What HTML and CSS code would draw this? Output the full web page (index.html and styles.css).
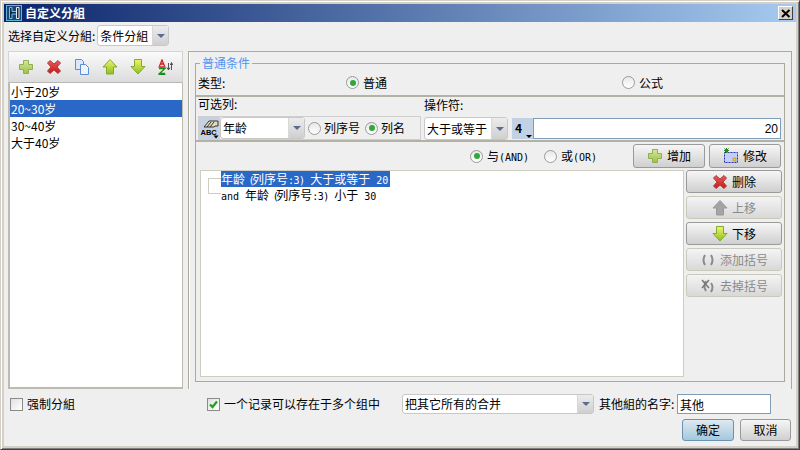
FILE: index.html
```html
<!DOCTYPE html>
<html lang="zh">
<head>
<meta charset="utf-8">
<title>自定义分組</title>
<link rel="stylesheet" href="styles.css">
</head>
<body>
<svg class="defs" width="0" height="0" aria-hidden="true">
  <defs>
    <linearGradient id="gp" x1="0" y1="0" x2="0" y2="1"><stop offset="0" stop-color="#d6e89a"/><stop offset="1" stop-color="#9cc048"/></linearGradient>
    <linearGradient id="gx" x1="0" y1="0" x2="0" y2="1"><stop offset="0" stop-color="#ee5a5a"/><stop offset="1" stop-color="#c81818"/></linearGradient>
    <linearGradient id="ga" x1="0" y1="0" x2="0" y2="1"><stop offset="0" stop-color="#f0f46a"/><stop offset="1" stop-color="#8cc020"/></linearGradient>
    <symbol id="i-plus" viewBox="0 0 16 16"><path d="M5.500 1.500h5v4h4v5h-4v4h-5v-4h-4v-5h4z" fill="url(#gp)" stroke="#8fb050"/></symbol>
    <symbol id="i-x" viewBox="0 0 16 16"><path d="M1.500 4l2.500-2.500 4 3.500 4-3.500 2.500 2.500-3.500 4 3.500 4-2.500 2.500-4-3.500-4 3.500-2.500-2.500 3.500-4z" fill="url(#gx)" stroke="#a84040"/></symbol>
    <symbol id="i-copy" viewBox="0 0 16 16"><path d="M1.500 .5h6l2 2v8h-8z" fill="#dce8fa" stroke="#5c8ed0"/><path d="M6.500 5.500h5l3 3v7h-8z" fill="#eef4fe" stroke="#5c8ed0"/></symbol>
    <symbol id="i-up" viewBox="0 0 16 16"><path d="M8 .5l7 7.500h-3.500v7h-7v-7h-3.500z" fill="url(#ga)" stroke="#84a830"/></symbol>
    <symbol id="i-down" viewBox="0 0 16 16"><path d="M4.500 .5h7v7h3.500l-7 7.500-7-7.500h3.500z" fill="url(#ga)" stroke="#84a830"/></symbol>
    <symbol id="i-up-off" viewBox="0 0 16 16"><path d="M8 .5l7 7.500h-3.500v7h-7v-7h-3.500z" fill="#a4a4a4" stroke="#999"/></symbol>
  </defs>
</svg>

<div class="window">
  <header class="titlebar">
    <svg class="app-icon" viewBox="0 0 16 16" width="16" height="16"><rect x=".5" y=".5" width="15" height="15" fill="#1c4672" stroke="#5fb4d8"/><path d="M3.500 2.500v11h2.500V9h4.500V6.500H6v-4z" fill="#0e2a50" stroke="#6cc4e4"/><path d="M10.500 2.500h2.500v11h-2.500z" fill="#0e2a50" stroke="#e0f0f8"/></svg>
    <span class="title-text">自定义分組</span>
    <span class="close-btn"><svg viewBox="0 0 10 9" width="10" height="9"><path d="M1 1l7.500 7M8.500 1l-7.500 7" stroke="#000" stroke-width="2" fill="none"/></svg></span>
  </header>

  <div class="select-row">
    <span>选择自定义分組:</span>
    <div class="combo combo-kind"><span class="combo-value">条件分組</span><span class="combo-arrow"></span></div>
  </div>

  <main class="main">
    <section class="left-panel">
      <div class="toolbar">
        <svg class="icon"><use href="#i-plus"/></svg>
        <svg class="icon"><use href="#i-x"/></svg>
        <svg class="icon"><use href="#i-copy"/></svg>
        <svg class="icon"><use href="#i-up"/></svg>
        <svg class="icon"><use href="#i-down"/></svg>
        <svg class="icon" viewBox="0 0 16 16"><path d="M1.500 7l2.500-6 2.500 6M2.500 5h3M.5 8h7" stroke="#d02020" stroke-width="1.300" fill="none"/><path d="M1 9.500h6L1.500 14.500H7M.5 15.500h7" stroke="#189018" stroke-width="1.300" fill="none"/><path d="M10.500 4v7M9 8.500l1.500 2.500L12 8.500M13.500 4v7M12.300 6l1.200-2.500L14.700 6" stroke="#555" fill="none"/></svg>
      </div>
      <ul class="group-list">
        <li>小于20岁</li>
        <li class="selected">20~30岁</li>
        <li>30~40岁</li>
        <li>大于40岁</li>
      </ul>
    </section>

    <section class="right-panel">
      <fieldset class="group-box">
        <legend>普通条件</legend>
        <div class="type-row">
          <span class="type-label">类型:</span>
          <label class="radio-item type-a"><span class="radio on"></span>普通</label>
          <label class="radio-item type-b"><span class="radio"></span>公式</label>
        </div>

        <div class="column-row">
          <div class="column-block">
            <div class="field-label">可选列:</div>
            <div class="column-box">
              <span class="abc-icon"><svg viewBox="0 0 21 22" width="21" height="22"><path d="M5 10l5-6h9v5h-3l-1 1z" stroke="#333" fill="#e8dcb8"/><path d="M8 10l4-5M11 10l4-5" stroke="#333"/><text x="1.500" y="18" class="abc-text">ABC</text><path d="M14.500 18.500h5l-2.500 3z" fill="#000"/></svg></span>
              <div class="combo combo-column"><span class="combo-value">年龄</span><span class="combo-arrow"></span></div>
              <label class="radio-item seq"><span class="radio"></span>列序号</label>
              <label class="radio-item nm"><span class="radio on"></span>列名</label>
            </div>
          </div>
          <div class="op-block">
            <div class="field-label">操作符:</div>
            <div class="combo combo-op"><span class="combo-value">大于或等于</span><span class="combo-arrow"></span></div>
          </div>
          <div class="value-block">
            <span class="num-badge">4</span>
            <input class="value-input" type="text" value="20">
          </div>
        </div>

        <div class="logic-row">
          <label class="radio-item and-item"><span class="radio on"></span><span>与<span class="mono">(AND)</span></span></label>
          <label class="radio-item or-item"><span class="radio"></span><span>或<span class="mono">(OR)</span></span></label>
          <button class="btn btn-top add-btn"><svg class="icon"><use href="#i-plus"/></svg>增加</button>
          <button class="btn btn-top"><svg class="icon" viewBox="0 0 16 16"><rect x="1.500" y="4.500" width="13" height="10" fill="#c8ccf8" stroke="#2030b0" stroke-dasharray="2 1"/><path d="M3.500 0v5M1 2.500h5M1.500 .5l4 4M5.500 .5l-4 4" stroke="#2c8030"/><rect x="10" y="10" width="3" height="3" fill="#f0d020" stroke="#a08010" stroke-width=".5"/></svg>修改</button>
        </div>

        <div class="tree-row">
          <div class="tree">
            <div class="tree-lines"></div>
            <div class="tree-nodes">
              <div class="tree-node selected">年龄<span class="mono tight"> (</span>列序号<span class="mono snug">:3) </span>大于或等于<span class="mono"> 20</span></div>
              <div class="tree-node"><span class="mono">and </span>年龄<span class="mono tight"> (</span>列序号<span class="mono snug">:3) </span>小于<span class="mono"> 30</span></div>
            </div>
          </div>
          <div class="side-buttons">
            <button class="btn"><svg class="icon"><use href="#i-x"/></svg>删除</button>
            <button class="btn disabled"><svg class="icon"><use href="#i-up-off"/></svg>上移</button>
            <button class="btn"><svg class="icon"><use href="#i-down"/></svg>下移</button>
            <button class="btn disabled"><svg class="icon" viewBox="0 0 16 16"><path d="M5 3Q2 8 5 13M11 3Q14 8 11 13" stroke="#8a8a8a" stroke-width="2" fill="none"/></svg>添加括号</button>
            <button class="btn disabled"><svg class="icon" viewBox="0 0 16 16"><path d="M6 3Q3 8 6 13M11 5Q14 9 11 14" stroke="#8a8a8a" stroke-width="2" fill="none"/><path d="M2 2l7 8M9 2l-7 8" stroke="#777" stroke-width="1.500"/></svg>去掉括号</button>
          </div>
        </div>
      </fieldset>
    </section>
  </main>

  <div class="options-row">
    <label class="check-item force"><span class="checkbox"></span>强制分組</label>
    <label class="check-item multi"><span class="checkbox"><svg viewBox="0 0 11 11" width="11" height="11"><path d="M2 5.500l2.500 2.500L9 2.500" stroke="#1ea01e" stroke-width="2.200" fill="none"/></svg></span>一个记录可以存在于多个组中</label>
    <div class="combo combo-merge"><span class="combo-value">把其它所有的合并</span><span class="combo-arrow"></span></div>
    <span class="other-label">其他組的名字:</span>
    <input class="other-input" type="text" value="其他">
  </div>

  <footer class="footer">
    <button class="btn primary">确定</button>
    <button class="btn cancel">取消</button>
  </footer>
</div>
</body>
</html>
```

FILE: styles.css
```css
* { box-sizing: border-box; }
html, body { margin: 0; padding: 0; }
body {
  width: 800px;
  height: 450px;
  overflow: hidden;
  font: 12px/16px "Noto Sans CJK SC", "Liberation Sans", sans-serif;
  color: #000;
  background: #efefef;
}
.defs { display: block; height: 0; }
.mono { font: 10px/12px "DejaVu Sans Mono", monospace; white-space: pre; }
.tight { letter-spacing: -2.5px; }
.snug { letter-spacing: -0.5px; }

.window {
  width: 800px;
  height: 450px;
  padding: 3px;
  background: #efefef;
  border: 1px solid;
  border-color: #d4d0c8 #404040 #404040 #d4d0c8;
  box-shadow: inset 1px 1px 0 #fff, inset -1px -1px 0 #808080, inset 0 0 0 3px #d4d0c8;
}

.titlebar {
  height: 18px;
  display: flex;
  align-items: center;
  padding: 0 3px 0 2px;
  background: linear-gradient(90deg, #0a246a, #a6caf0);
}
.app-icon { flex: none; }
.title-text { margin-left: 3px; flex: 1; color: #fff; font-weight: 700; }
.close-btn {
  width: 15px;
  height: 14px;
  display: flex;
  align-items: center;
  justify-content: center;
  background: #d4d0c8;
  border: 1px solid;
  border-color: #fff #404040 #404040 #fff;
}

.select-row {
  height: 21px;
  margin-top: 3px;
  padding-left: 4px;
  display: flex;
  align-items: center;
  gap: 2px;
}

.combo {
  display: flex;
  align-items: center;
  background: #fff;
  border: 1px solid #c8c8c8;
  border-radius: 3px;
  flex: none;
}
.combo-value { flex: 1; padding-left: 2px; white-space: nowrap; overflow: hidden; }
.combo-arrow {
  width: 16px;
  align-self: stretch;
  flex: none;
  display: flex;
  align-items: center;
  justify-content: center;
  background: linear-gradient(#ececec, #cfcfcf);
  border-left: 1px solid #d8d8d8;
}
.combo-arrow::after {
  content: "";
  border: 4px solid transparent;
  border-top: 4px solid #5a6a90;
  border-bottom: 0;
}
.combo-kind { width: 72px; height: 21px; }

.main {
  height: 338px;
  margin: 5px 4px 0;
  display: grid;
  grid-template-columns: 175px 604px;
  column-gap: 5px;
}

.left-panel {
  display: flex;
  flex-direction: column;
  border: 2px solid #bdbab0;
  border-top: 0;
  border-right-width: 1px;
}
.toolbar {
  height: 32px;
  margin-left: -2px;
  margin-right: -1px;
  padding-left: 9px;
  display: flex;
  align-items: center;
  gap: 12px;
  background: linear-gradient(#fafafa, #dcdcdc);
  border: 1px solid #d4d4d4;
  border-bottom-color: #b8b8b8;
}
.icon { width: 16px; height: 16px; flex: none; }
.group-list {
  flex: 1;
  margin: 0;
  padding: 0;
  list-style: none;
  background: #fff;
}
.group-list li { height: 17px; line-height: 17px; padding-left: 1px; }
.group-list li.selected { background: #2a68c8; color: #fff; }

.right-panel {
  border: 1px solid #aba99c;
  border-bottom: 0;
  padding: 0 6px;
  box-shadow: inset 1px 0 0 #fff;
}
.group-box {
  margin: 4px 0 0;
  padding: 0;
  height: 326px;
  border: 1px solid #aba99c;
  min-width: 0;
}
.group-box legend {
  margin-left: 4px;
  padding: 0 2px;
  line-height: 14px;
  color: #4f94ef;
}
.type-row {
  height: 27px;
  display: flex;
  align-items: center;
  padding-left: 2px;
  border-bottom: 2px solid #b4b2a6;
}
.type-label { width: 148px; }
.radio-item { display: flex; align-items: center; gap: 4px; white-space: nowrap; }
.type-a { width: 276px; }
.radio {
  width: 13px;
  height: 13px;
  flex: none;
  display: flex;
  align-items: center;
  justify-content: center;
  border: 1px solid #9a9a9a;
  border-radius: 50%;
  background: linear-gradient(#e8e8e8, #fff);
}
.radio.on::after {
  content: "";
  width: 6px;
  height: 6px;
  border-radius: 50%;
  background: #32a838;
}

.column-row {
  height: 45px;
  padding: 0 3px 0 2px;
  display: flex;
  align-items: flex-end;
  border-bottom: 2px solid #b4b2a6;
}
.field-label { height: 19px; line-height: 13px; }
.column-box {
  width: 223px;
  height: 24px;
  display: flex;
  align-items: center;
  border: 1px solid #cfcfcf;
}
.abc-icon { width: 21px; height: 22px; flex: none; background: #c4d2e2; }
.abc-text { font: 700 7.500px "Liberation Sans", sans-serif; fill: #000; }
.combo-column { width: 85px; height: 22px; }
.seq { margin-left: 3px; gap: 3px; }
.nm { margin-left: 5px; gap: 3px; }
.op-block { margin-left: 3px; }
.combo-op { width: 84px; height: 23px; }
.value-block {
  margin-left: 4px;
  height: 21px;
  margin-bottom: 1px;
  flex: 1;
  display: flex;
}
.num-badge {
  width: 21px;
  flex: none;
  padding-left: 3px;
  font-weight: 700;
  line-height: 19px;
  background: #c2d2e4;
  position: relative;
}
.num-badge::after {
  content: "";
  position: absolute;
  right: 1px;
  bottom: 1px;
  border: 3px solid transparent;
  border-top: 3px solid #000;
  border-bottom: 0;
}
.value-input {
  flex: 1;
  min-width: 0;
  height: 21px;
  padding: 0 2px;
  border: 1px solid #7f9db9;
  background: #fff;
  text-align: right;
  font: 12px "Liberation Sans", sans-serif;
}

.logic-row {
  height: 28px;
  padding: 2px 3px 2px 0;
  display: flex;
  align-items: center;
}
.and-item { margin-left: 274px; width: 74px; }
.or-item { width: 89px; }
.btn {
  height: 23px;
  padding: 0;
  display: flex;
  align-items: center;
  justify-content: center;
  gap: 4px;
  font: inherit;
  color: #000;
  background: linear-gradient(#f6f6f6, #cfcfcf);
  border: 1px solid #9a9a9a;
  border-radius: 3px;
}
.btn-top { width: 72px; height: 24px; }
.add-btn { margin-right: 4px; }
.btn.disabled { color: #8a8a8a; border-color: #cbc9ba; background: linear-gradient(#f4f4f4, #d8d8d8); }

.tree-row {
  height: 207px;
  padding-left: 4px;
  display: flex;
  gap: 2px;
}
.tree {
  width: 484px;
  display: flex;
  background: #fff;
  border: 1px solid #cfcdc2;
}
.tree-lines {
  width: 13px;
  height: 16px;
  flex: none;
  margin: 7px 0 0 7px;
  border: 1px solid #d0cdc0;
  border-right: 0;
}
.tree-nodes { display: flex; flex-direction: column; align-items: flex-start; }
.tree-node { height: 15px; line-height: 15px; padding-right: 2px; white-space: pre; }
.tree-node .mono { line-height: 12px; }
.tree-node.selected { background: #2a68c8; color: #fff; height: 16px; }
.side-buttons {
  width: 96px;
  display: flex;
  flex-direction: column;
  gap: 3px;
}

.options-row {
  height: 20px;
  margin: 5px 4px 0;
  padding-left: 2px;
  display: flex;
  align-items: center;
}
.check-item { display: flex; align-items: center; gap: 4px; white-space: nowrap; }
.force { width: 197px; }
.multi { width: 195px; }
.checkbox {
  width: 13px;
  height: 13px;
  flex: none;
  display: flex;
  align-items: center;
  justify-content: center;
  border: 1px solid #8a8a8a;
  background: linear-gradient(135deg, #e0e0e0, #fff);
}
.combo-merge { width: 192px; height: 20px; }
.other-label { margin-left: 5px; width: 78px; white-space: nowrap; }
.other-input {
  width: 94px;
  height: 20px;
  padding: 0 2px;
  border: 1px solid #7f9db9;
  font: inherit;
  background: #fff;
}

.footer {
  margin: 5px 5px 0 0;
  display: flex;
  justify-content: flex-end;
  gap: 6px;
}
.footer .btn { width: 52px; height: 22px; }
.footer .btn.cancel { width: 51px; }
.btn.primary { background: linear-gradient(#dfe9f0, #a4c8de); border-color: #6a93ae; }
```
